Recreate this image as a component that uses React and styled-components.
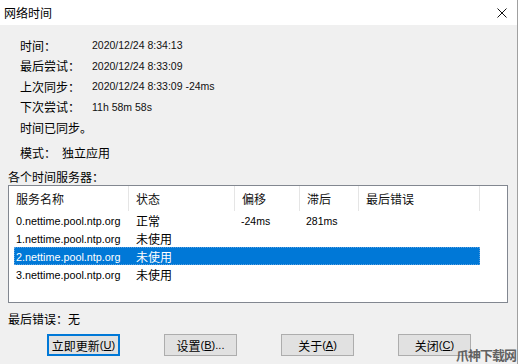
import styled, { createGlobalStyle } from "styled-components";

const GlobalStyle = createGlobalStyle`
  html, body {
    margin: 0;
    padding: 0;
    background: #f0f0f0;
  }
  body {
    font-family: "Noto Sans CJK SC", "Liberation Sans", sans-serif;
    font-size: 12px;
    color: #000;
  }
`;

const info = [
  ["时间：", "2020/12/24 8:34:13"],
  ["最后尝试：", "2020/12/24 8:33:09"],
  ["上次同步：", "2020/12/24 8:33:09 -24ms"],
  ["下次尝试：", "11h 58m 58s"],
];

const columns = ["服务名称", "状态", "偏移", "滞后", "最后错误"];

const servers = [
  { name: "0.nettime.pool.ntp.org", status: "正常", offset: "-24ms", delay: "281ms" },
  { name: "1.nettime.pool.ntp.org", status: "未使用" },
  { name: "2.nettime.pool.ntp.org", status: "未使用", selected: true },
  { name: "3.nettime.pool.ntp.org", status: "未使用" },
];

const buttons = [
  { label: "立即更新", key: "U", isDefault: true },
  { label: "设置", key: "B", suffix: "..." },
  { label: "关于", key: "A" },
  { label: "关闭", key: "C" },
];

const App = () => {
  return (
    <Window>
      <GlobalStyle />
      <TitleBar>
        <Title>网络时间</Title>
        <CloseIcon viewBox="0 0 10 10">
          <path d="M0.5 0.5 L9.5 9.5 M9.5 0.5 L0.5 9.5" />
        </CloseIcon>
      </TitleBar>
      <Body>
        <InfoGrid>
          {info.map(([label, value]) => (
            <InfoRow key={label}>
              <Label>{label}</Label>
              <Value>{value}</Value>
            </InfoRow>
          ))}
        </InfoGrid>
        <Status>时间已同步。</Status>
        <Mode>
          模式：<ModeValue>独立应用</ModeValue>
        </Mode>
        <SectionLabel>各个时间服务器：</SectionLabel>
        <ListBox>
          <HeaderRow>
            {columns.map((c) => (
              <HeaderCell key={c}>{c}</HeaderCell>
            ))}
          </HeaderRow>
          <Rows>
            {servers.map((s) => (
              <Row key={s.name} $selected={s.selected}>
                <NameCell>{s.name}</NameCell>
                <StatusCell>{s.status}</StatusCell>
                <NumCell>{s.offset}</NumCell>
                <NumCell>{s.delay}</NumCell>
                <NumCell />
              </Row>
            ))}
          </Rows>
        </ListBox>
        <LastError>最后错误：无</LastError>
        <ButtonBar>
          {buttons.map((b) => (
            <Button key={b.key} $default={b.isDefault}>
              {b.label}
              <Mnemonic>
                (<u>{b.key}</u>){b.suffix}
              </Mnemonic>
            </Button>
          ))}
        </ButtonBar>
      </Body>
      <Watermark>爪神下载网</Watermark>
    </Window>
  );
};

export default App;

const Window = styled.div`
  position: relative;
  width: 518px;
  height: 364px;
  box-sizing: border-box;
  border-right: 1px solid #a0a0a0;
  background: #f0f0f0;
  display: flex;
  flex-direction: column;
  overflow: hidden;
`;

const TitleBar = styled.div`
  height: 25px;
  flex: none;
  background: #fff;
  display: flex;
  align-items: center;
  justify-content: space-between;
  padding: 0 10px 0 4px;
`;

const Title = styled.span`
  font-size: 12px;
  line-height: 1;
`;

const CloseIcon = styled.svg`
  width: 10px;
  height: 10px;
  stroke: #111;
  stroke-width: 1;
  fill: none;
`;

const Body = styled.div`
  display: flex;
  flex-direction: column;
  padding: 10px 9px 0 8px;
`;

const InfoGrid = styled.div`
  display: flex;
  flex-direction: column;
  padding-left: 12px;
`;

const InfoRow = styled.div`
  display: grid;
  grid-template-columns: 72px 1fr;
  align-items: center;
  height: 20.5px;
`;

const Label = styled.span`
  font-size: 12px;
`;

const Value = styled.span`
  font-family: "Liberation Sans", sans-serif;
  font-size: 10.5px;
  color: #111;
`;

const Status = styled.div`
  height: 20.5px;
  display: flex;
  align-items: center;
  padding-left: 12px;
`;

const Mode = styled.div`
  height: 20px;
  margin-top: 4.5px;
  display: flex;
  align-items: center;
  padding-left: 12px;
`;

const ModeValue = styled.span`
  margin-left: 6px;
`;

const SectionLabel = styled.div`
  height: 18px;
  margin-top: 5px;
  display: flex;
  align-items: center;
`;

const ListBox = styled.div`
  height: 118px;
  box-sizing: border-box;
  border: 1px solid #828790;
  background: #fff;
  display: flex;
  flex-direction: column;
`;

const HeaderRow = styled.div`
  display: grid;
  grid-template-columns: 120px 106px 65px 59px 121px;
  width: 471px;
  height: 25px;
  flex: none;
`;

const HeaderCell = styled.div`
  display: flex;
  align-items: center;
  padding-left: 7px;
  border-right: 1px solid #e5e5e5;
  font-size: 12px;
  color: #111;
`;

const Rows = styled.div`
  display: flex;
  flex-direction: column;
  align-items: flex-start;
  padding-left: 5px;
`;

const Row = styled.div`
  display: grid;
  grid-template-columns: 115px 106px 65px 59px 121px;
  width: 466px;
  height: 18px;
  box-sizing: border-box;
  align-items: center;
  background: ${(p) => (p.$selected ? "#0078d7" : "transparent")};
  color: ${(p) => (p.$selected ? "#fff" : "#000")};
  border: 1px dotted ${(p) => (p.$selected ? "#5aa0e0" : "transparent")};
`;

const NameCell = styled.span`
  font-family: "Liberation Sans", sans-serif;
  font-size: 10.8px;
  padding-left: 1px;
  white-space: nowrap;
`;

const StatusCell = styled.span`
  font-size: 12px;
  padding-left: 6px;
`;

const NumCell = styled.span`
  font-family: "Liberation Sans", sans-serif;
  font-size: 10.5px;
  padding-left: 5px;
`;

const LastError = styled.div`
  height: 20px;
  margin-top: 5px;
  display: flex;
  align-items: center;
`;

const ButtonBar = styled.div`
  display: flex;
  gap: 44px;
  margin-top: 6px;
  padding-left: 39px;
`;

const Button = styled.button`
  width: 73px;
  height: 22px;
  box-sizing: border-box;
  padding: 0;
  font-family: "Noto Sans CJK SC", sans-serif;
  font-size: 12px;
  color: #000;
  background: #e1e1e1;
  border: ${(p) => (p.$default ? "2px solid #0078d7" : "1px solid #adadad")};
  display: flex;
  align-items: center;
  justify-content: center;
`;

const Mnemonic = styled.span`
  font-family: "Liberation Sans", sans-serif;
  font-size: 11px;
`;

const Watermark = styled.div`
  position: absolute;
  right: 1px;
  bottom: 1px;
  font-size: 13px;
  line-height: 16px;
  font-weight: 700;
  color: #4a4a4a;
  letter-spacing: -1px;
  opacity: 0.85;
`;
